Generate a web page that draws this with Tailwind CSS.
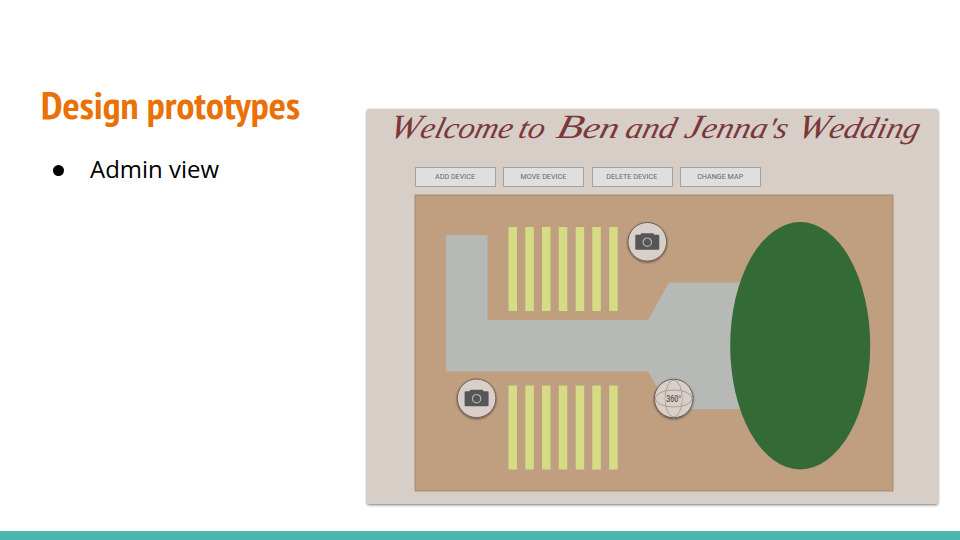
<!DOCTYPE html>
<html lang="en">
<head>
<meta charset="utf-8">
<title>Design prototypes</title>
<script src="https://cdn.jsdelivr.net/npm/@tailwindcss/browser@4"></script>
</head>
<body class="h-[540px] w-[960px] overflow-hidden bg-white font-['Open_Sans',sans-serif]">
<main class="flex h-[540px] flex-col">
  <div class="flex min-h-0 flex-1">
    <section class="w-[367px] shrink-0 pt-[80px]">
      <h1 class="h-[56px]">
        <svg class="block h-[56px] w-[366px] overflow-visible" viewBox="0 80 366 56">
          <text x="41" y="118.500" textLength="259" lengthAdjust="spacingAndGlyphs" class="fill-[#ea7008] font-['PT_Sans_Narrow','Open_Sans',sans-serif] text-[38px] font-bold">Design prototypes</text>
        </svg>
      </h1>
      <ul class="pt-[17px] text-[24px] leading-[32px] text-black">
        <li class="flex items-center pl-[53px]">
          <span class="mt-[3px] mr-[26px] h-[11px] w-[11px] rounded-full bg-black"></span>
          <svg class="block h-[32px] w-[140px] overflow-visible" viewBox="0 0 140 32"><text x="0" y="25" textLength="129" lengthAdjust="spacingAndGlyphs" class="font-['Open_Sans',sans-serif] text-[24px]">Admin view</text></svg>
        </li>
      </ul>
    </section>
    <section class="mt-[109px] h-[395px] w-[571px] rounded-[2px] bg-[#d7cec7] shadow-[0_1px_3px_rgba(0,0,0,0.55)]">
      <h2 class="h-[58px]">
        <svg class="block h-[58px] w-[571px] overflow-visible" viewBox="367 109 571 58">
          <g transform="translate(0 138) skewX(-14)" class="fill-[#7c373a] font-['Liberation_Serif',serif] text-[30px] italic">
            <text x="388" y="0" textLength="123" lengthAdjust="spacingAndGlyphs"><tspan class="text-[34px]">W</tspan>elcome</text>
            <text x="517" y="0" textLength="26" lengthAdjust="spacingAndGlyphs">to</text>
            <text x="555" y="0" textLength="62" lengthAdjust="spacingAndGlyphs"><tspan class="text-[34px]">B</tspan>en</text>
            <text x="624" y="0" textLength="50" lengthAdjust="spacingAndGlyphs">and</text>
            <text x="683" y="0" textLength="103" lengthAdjust="spacingAndGlyphs"><tspan class="text-[34px]">J</tspan>enna's</text>
            <text x="796" y="0" textLength="122" lengthAdjust="spacingAndGlyphs"><tspan class="text-[34px]">W</tspan>edding</text>
          </g>
        </svg>
      </h2>
      <nav class="flex h-[20px] gap-[7.4px] pl-[48px] font-[Roboto,sans-serif] text-[7.2px] text-[#666]">
        <button class="h-[20px] w-[81px] border border-[#a4a19e] bg-[#dfdfdf] pr-[1px]">ADD DEVICE</button>
        <button class="h-[20px] w-[81px] border border-[#a4a19e] bg-[#dfdfdf] pr-[1px]">MOVE DEVICE</button>
        <button class="h-[20px] w-[81px] border border-[#a4a19e] bg-[#dfdfdf] pr-[1px]">DELETE DEVICE</button>
        <button class="h-[20px] w-[81px] border border-[#a4a19e] bg-[#dfdfdf] pr-[1px]">CHANGE MAP</button>
      </nav>
      <svg class="mt-[7px] ml-[47px] block h-[300px] w-[480px]" viewBox="414 194 480 300">
        <defs>
          <filter id="lift" x="-20%" y="-20%" width="140%" height="150%"><feDropShadow dx="0" dy="1" stdDeviation="1" flood-color="#000" flood-opacity=".5"/></filter>
          <g id="camera">
            <circle r="19.3" fill="#d9cfc8" stroke="#68605a" stroke-width="1" filter="url(#lift)"/>
            <path d="M-11-7H-7L-6-8.500H6L7-7H11Q12-7 12-6V7Q12 8 11 8H-11Q-12 8-12 7V-6Q-12-7-11-7Z" fill="#555657"/>
            <circle r="4.200" cy=".4" fill="none" stroke="#b7b2ae" stroke-width="1.200"/>
          </g>
        </defs>
        <rect x="415" y="195" width="478" height="296" fill="#bf9f80" stroke="#9b8068" stroke-width=".8"/>
        <path d="M446 235H487.500V320H648L669 282.500H760V409H670L648 371.500H446Z" fill="#b6b9b5"/>
        <g fill="#d6dc86">
          <path d="M508.500 227h8.500v84h-8.500zM525.300 227h8.500v84h-8.500zM542 227h8.500v84h-8.500zM558.800 227h8.500v84h-8.500zM575.700 227h8.500v84h-8.500zM592.300 227h8.500v84h-8.500zM609.200 227h8.500v84h-8.500z"/>
          <path d="M508.500 385.500h8.500v84h-8.500zM525.300 385.500h8.500v84h-8.500zM542 385.500h8.500v84h-8.500zM558.800 385.500h8.500v84h-8.500zM575.700 385.500h8.500v84h-8.500zM592.300 385.500h8.500v84h-8.500zM609.200 385.500h8.500v84h-8.500z"/>
        </g>
        <ellipse cx="800.200" cy="345.700" rx="70" ry="123.700" fill="#346a35"/>
        <use href="#camera" x="647.300" y="241.800"/>
        <use href="#camera" x="476.600" y="398.300"/>
        <g transform="translate(673.700 398.500)">
          <circle r="19.300" fill="#d9cfc8" stroke="#68605a" filter="url(#lift)"/>
          <g fill="none" stroke="#9b928c" stroke-width=".8">
            <ellipse rx="8.500" ry="18.500"/>
            <ellipse rx="18.500" ry="8.500"/>
          </g>
          <rect x="-8" y="-4" width="16" height="8" fill="#d9cfc8"/>
          <text x="-7.500" y="3" textLength="15" lengthAdjust="spacingAndGlyphs" class="fill-[#55514e] font-[Roboto,sans-serif] text-[8.5px] font-medium">360°</text>
        </g>
      </svg>
    </section>
  </div>
  <footer class="h-[9px] shrink-0 bg-[#4db6ac]"></footer>
</main>
</body>
</html>
